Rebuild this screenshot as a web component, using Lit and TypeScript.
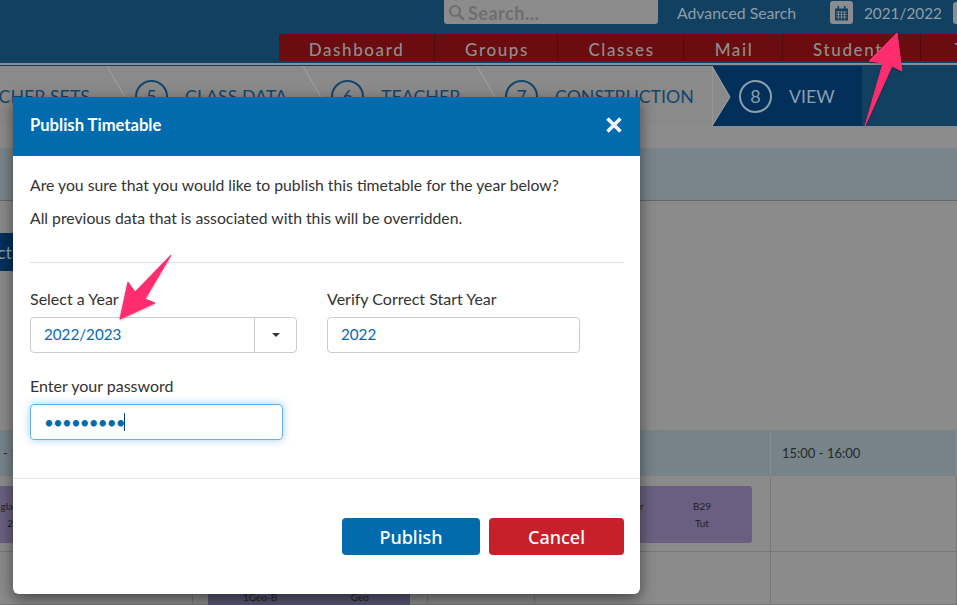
import { LitElement, html, css, svg } from "lit";
import { customElement } from "lit/decorators.js";

const chevron = svg`<svg class="chev" width="20" height="61" viewBox="0 0 20 61"><path d="M0 0 L18 31 L0 61" fill="none" stroke="#a3a3a3" stroke-width="1"/></svg>`;

@customElement("app-root")
export class AppRoot extends LitElement {
  static styles = css`
    :host { display: block; position: relative; width: 100%; height: 605px; overflow: hidden; background: #8b8b8b; font-family: Lato, "Open Sans", sans-serif; color: #333; }
    * { box-sizing: border-box; }
    .top { background: #124060; height: 63px; display: flex; flex-direction: column; }
    .util { height: 34px; display: flex; align-items: flex-start; padding-left: 444px; }
    .util > * { flex: none; }
    .search { width: 214px; height: 24px; background: #8c8c8c; border-radius: 0 0 3px 3px; display: flex; align-items: center; padding: 1px 0 0 4px; gap: 3px; color: #6e6e6e; font-size: 18px; font-weight: 700; letter-spacing: .5px; }
    .adv { margin-left: 19px; margin-top: 3px; color: #8d9ea9; font-size: 15.8px; line-height: 20px; width: 153px; }
    .cal { width: 23px; height: 23px; margin-top: 1px; border-radius: 3px; background: #8a8d8f; display: flex; align-items: center; justify-content: center; }
    .yr { margin-left: 11px; margin-top: 3px; width: 89px; color: #8f9ea8; font-size: 15.3px; line-height: 20px; }
    .stub { width: 10px; height: 22px; margin-top: 2px; background: #8a8d8f; border-radius: 3px 0 0 3px; }
    nav { margin-left: 279px; height: 27px; background: #6b0c10; display: flex; width: 820px; }
    nav a { height: 27px; border-right: 1px solid #4f0a0d; color: #8f8f8f; font-size: 17px; font-weight: 500; letter-spacing: 1.6px; line-height: 31px; text-align: center; white-space: nowrap; flex: none; padding-left: 2px; }
    nav a:first-child { padding-left: 0; }
    .rule { height: 2px; background: #8e8e8e; }
    .steps { height: 61px; display: flex; border-top: 1px solid #124060; background: #124060; }
    .step { position: relative; height: 60px; background: #8a8a8a; display: flex; align-items: center; gap: 17px; padding-left: 28px; color: #12466b; font-size: 17.8px; line-height: 22px; flex: none; white-space: nowrap; }
    .step.first { justify-content: flex-end; padding: 0 17px 0 0; overflow: hidden; }
    .chev { position: absolute; left: 0; top: 0; }
    .num { width: 33px; height: 33px; border: 2px solid #12466b; border-radius: 50%; display: flex; align-items: center; justify-content: center; flex: none; font-size: 18px; }
    .view { width: 150px; background: #02305a; color: #8c9fae; padding-left: 27px; position: relative; }
    .view .num { border-color: #8c9fae; }
    .tip { position: absolute; left: 0; top: 0; }
    .band1 { height: 22px; background: #8c8c8c; }
    .band2 { height: 53px; background: #78858b; border-bottom: 1px solid #666; }
    .mid { height: 229px; padding-top: 32px; }
    .mbtn { width: 13px; height: 38px; background: #02305a; color: #8d9dac; font-size: 18px; line-height: 38px; white-space: nowrap; display: flex; justify-content: flex-end; padding-right: 1px; }
    .grid { display: grid; grid-template-columns: 193px 235px 107px 236px 186px; grid-template-rows: 46px 76px 53px; }
    .c { border-right: 1px solid #777; border-bottom: 1px solid #777; }
    .h { background: #76848a; border-top: 1px solid #808080; border-bottom-color: #808080; font-size: 13px; color: #282828; display: flex; align-items: center; padding-left: 11px; white-space: nowrap; border-right-color: #858f94; }
    .h.lead { padding-left: 3px; }
    .card { background: #6a5f80; border-radius: 3px; font-size: 10px; color: #222; display: flex; justify-content: space-between; line-height: 17px; text-align: center; }
    .r1 { padding: 10px 18px 8px 15px; }
    .r1 .card { height: 57px; padding-top: 12px; }
    .r1.left { padding-left: 0; }
    .r1.left .card { border-radius: 0 3px 3px 0; justify-content: flex-start; }
    .r1.left .stack { width: 13px; align-items: flex-end; }
    .r2 { padding: 24px 17px 0 15px; }
    .r2 .card { height: 40px; background: #575672; padding: 13px 41px 0 35px; }
    .stack { display: flex; flex-direction: column; }
    .r4 .card { padding-left: 90px; padding-right: 41px; }

    .modal { position: absolute; left: 13px; top: 97px; width: 627px; height: 497px; background: #fff; border-radius: 0 0 6px 6px; box-shadow: 0 5px 15px rgba(0,0,0,.5); display: flex; flex-direction: column; }
    .mh { height: 59px; background: #026bad; color: #fff; display: flex; align-items: center; justify-content: space-between; padding: 0 16px 3px 17px; font-size: 16.6px; font-weight: 700; }
    .mb { flex: none; height: 323px; padding: 0 16px 0 17px; border-top: 1px solid #fff; border-bottom: 1px solid #e5e5e5; }
    .p { font-size: 15.75px; line-height: 20px; color: #333; margin: 0; }
    .p1 { margin-top: 18px; }
    .p2 { margin-top: 13px; }
    hr { border: 0; border-top: 1px solid #e0e0e0; margin: 34px 0 0; }
    .form { display: grid; grid-template-columns: 267px 253px; column-gap: 30px; margin-top: 26px; }
    label { display: block; font-size: 16px; line-height: 20px; color: #333; height: 28px; }
    .ctl { height: 36px; border: 1px solid #ccc; border-radius: 4px; display: flex; align-items: center; padding: 0 0 2px 13px; color: #026bad; font-size: 15.2px; }
    .sel { padding: 0; }
    .sel span { flex: 1; padding-left: 13px; height: 100%; line-height: 33px; border-right: 1px solid #ccc; }
    .sel i { width: 41px; display: flex; justify-content: center; }
    .caret { width: 0; height: 0; border-left: 4px solid transparent; border-right: 4px solid transparent; border-top: 4px solid #333; }
    .second { margin-top: 23px; grid-column: 1; }
    .second .ctl { width: 253px; border-color: #66afe9; box-shadow: 0 0 8px rgba(102,175,233,.6), inset 0 1px 1px rgba(0,0,0,.05); font-size: 17px; letter-spacing: -.9px; padding: 0 0 0 13px; }
    .cur { display: inline-block; width: 1px; height: 18px; background: #02456f; margin-left: -1px; }
    .mf { display: flex; justify-content: flex-end; gap: 9px; padding: 39px 16px 0 0; }
    button { height: 37px; border: 0; border-radius: 4px; color: #fff; font-family: "Noto Sans", Lato, sans-serif; font-size: 18px; font-weight: 500; padding: 0; }
    .pub { width: 138px; background: #026bad; }
    .can { width: 135px; background: #c8202a; }
    .arrow { position: absolute; left: 0; top: 0; pointer-events: none; filter: drop-shadow(0 1px 1px rgba(0,0,0,.3)); }
  `;

  render() {
    return html`
      <div class="top">
        <div class="util">
          <div class="search">
            <svg width="17" height="17" viewBox="0 0 17 17"><circle cx="7" cy="7" r="5" fill="none" stroke="#6e6e6e" stroke-width="2.2"/><path d="M10.8 10.8 L15 15" stroke="#6e6e6e" stroke-width="2.6" stroke-linecap="round"/></svg>
            <span>Search...</span>
          </div>
          <div class="adv">Advanced Search</div>
          <div class="cal">
            <svg width="15" height="16" viewBox="0 0 15 16"><path d="M1 3.5 h13 v12 h-13 z" fill="#124060"/><path d="M2 7 h11 M2 9.5 h11 M2 12 h11 M4.5 6 v8.5 M7.5 6 v8.5 M10.5 6 v8.5" stroke="#8a8d8f" stroke-width=".8"/><rect x="3.5" y="1" width="1.6" height="3.5" fill="#124060"/><rect x="9.9" y="1" width="1.6" height="3.5" fill="#124060"/></svg>
          </div>
          <div class="yr">2021/2022</div>
          <div class="stub"></div>
        </div>
        <nav>
          <a style="width:156px">Dashboard</a>
          <a style="width:123px">Groups</a>
          <a style="width:126px">Classes</a>
          <a style="width:99px">Mail</a>
          <a style="width:138px">Students</a>
          <a style="width:154px;border:0">Timetable</a>
        </nav>
      </div>
      <div class="rule"></div>
      <div class="steps">
        <div class="step first" style="width:107px">CHER SETS</div>
        <div class="step" style="width:196px">${chevron}<span class="num">5</span><span>CLASS DATA</span></div>
        <div class="step" style="width:174px">${chevron}<span class="num">6</span><span>TEACHER</span></div>
        <div class="step" style="width:235px">${chevron}<span class="num">7</span><span>CONSTRUCTION</span></div>
        <div class="step view">
          <svg class="tip" width="19" height="60" viewBox="0 0 19 60"><path d="M0 0 L18 31 L0 60 Z" fill="#8a8a8a" stroke="#a3a3a3"/></svg>
          <span class="num">8</span><span>VIEW</span>
        </div>
      </div>
      <div class="band1"></div>
      <div class="band2"></div>
      <div class="mid"><div class="mbtn">ct</div></div>
      <div class="grid">
        <div class="c h lead">- 1</div>
        <div class="c h"></div>
        <div class="c h"></div>
        <div class="c h"></div>
        <div class="c h">15:00 - 16:00</div>
        <div class="c r1 left"><div class="card"><div class="stack"><span>gla</span><span>2</span></div></div></div>
        <div class="c"></div>
        <div class="c"></div>
        <div class="c r1 r4"><div class="card"><span>r</span><div class="stack"><span>B29</span><span>Tut</span></div></div></div>
        <div class="c"></div>
        <div class="c"></div>
        <div class="c r2"><div class="card"><span>1Geo-B</span><span>Geo</span></div></div>
        <div class="c"></div>
        <div class="c"></div>
        <div class="c"></div>
      </div>

      <div class="modal">
        <div class="mh">
          <span>Publish Timetable</span>
          <svg width="20" height="20" viewBox="0 0 20 20"><path d="M3.5 3.5 L16.5 16.5 M16.5 3.5 L3.5 16.5" stroke="#f2f6fa" stroke-width="3.6"/></svg>
        </div>
        <div class="mb">
          <p class="p p1">Are you sure that you would like to publish this timetable for the year below?</p>
          <p class="p p2">All previous data that is associated with this will be overridden.</p>
          <hr />
          <div class="form">
            <div>
              <label>Select a Year</label>
              <div class="ctl sel"><span>2022/2023</span><i><b class="caret"></b></i></div>
            </div>
            <div>
              <label>Verify Correct Start Year</label>
              <div class="ctl">2022</div>
            </div>
            <div class="second">
              <label>Enter your password</label>
              <div class="ctl"><span>•••••••••</span><b class="cur"></b></div>
            </div>
          </div>
        </div>
        <div class="mf">
          <button class="pub">Publish</button>
          <button class="can">Cancel</button>
        </div>
      </div>

      <svg class="arrow" width="957" height="605" viewBox="0 0 957 605">
        <path d="M897 33 L869 61 L883 63 L865 126 L892 66 L902 71 Z" fill="#ff2d6f" stroke="#ff2d6f" stroke-linejoin="round"/>
        <path d="M171 255 L135 292 L128 282 L120 319 L155 303 L145 299 Z" fill="#ff2d6f" stroke="#ff2d6f" stroke-linejoin="round"/>
      </svg>
    `;
  }
}
